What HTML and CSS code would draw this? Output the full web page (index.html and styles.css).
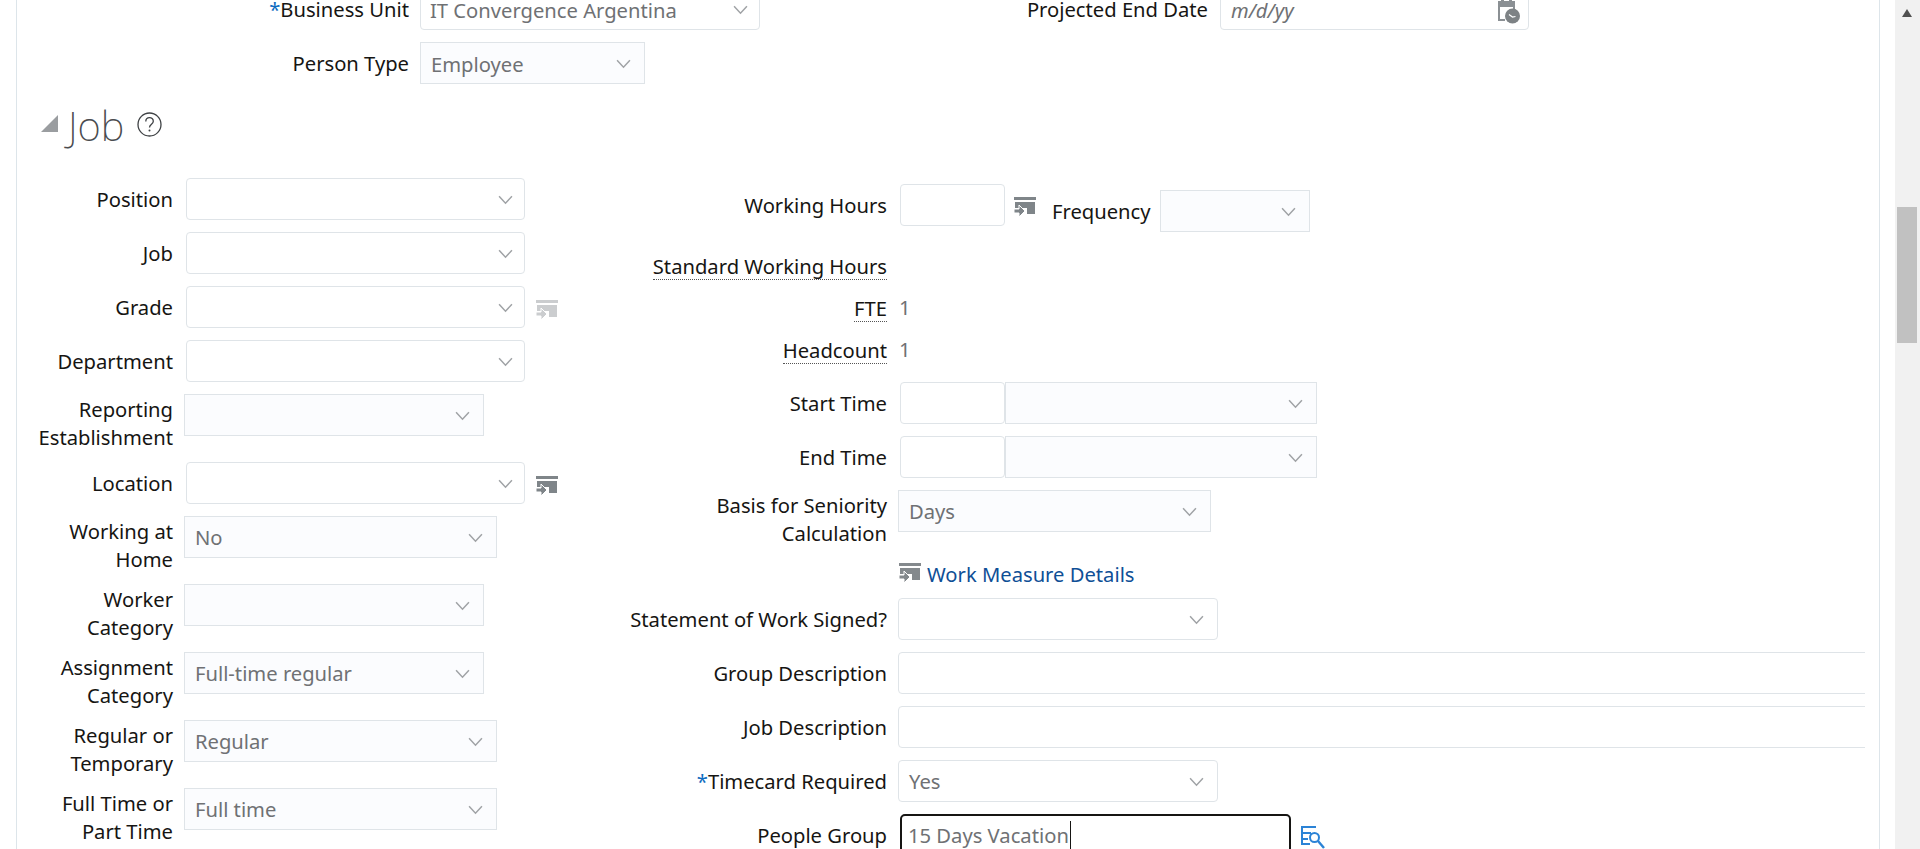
FILE: index.html
```html
<!DOCTYPE html>
<html lang="en">
<head>
  <meta charset="UTF-8">
  <title>Assignment - Job</title>
  <link rel="stylesheet" href="styles.css">
</head>
<body>

<svg class="defs" width="0" height="0">
  <symbol id="i-chev" viewBox="0 0 14 9"><path d="M1 1l6 6.5L13 1" fill="none" stroke="currentColor" stroke-width="1.4"/></symbol>
  <symbol id="i-action" viewBox="0 0 22 21"><path d="M0 0h22v3H0zM1 5h20v12h-8v-6H1z"/><path d="M0 12h5V8l6 6-6 6v-4H0z" stroke="#fff" stroke-width="1"/></symbol>
  <symbol id="i-search" viewBox="0 0 25 24"><path d="M1 1h15v2H3v4h8v2H3v4h5v2H3v3h7v2H1z"/><circle cx="14.500" cy="12.500" r="4.500" fill="none" stroke="currentColor" stroke-width="2"/><path d="M18 16l6 7" fill="none" stroke="currentColor" stroke-width="2.400"/></symbol>
</svg>

<div class="page">
  <main class="panel">

    <div class="row top">
      <label class="lbl lbl-top"><span class="req">*</span>Business Unit</label>
      <div class="sel sel-r w-bu"><span>IT Convergence Argentina</span><svg class="chev"><use href="#i-chev"/></svg></div>
      <label class="lbl lbl-end">Projected End Date</label>
      <div class="sel sel-r w-date"><em>m/d/yy</em>
        <svg class="cal" viewBox="0 0 25 24">
          <path d="M3 1h3V0h3v1h5V0h3v1h3v9h-2V7H5v12h5v2H3z" fill="#8b9094"/>
          <circle cx="17.500" cy="16" r="7.500" fill="#7d8285"/>
          <path d="M14 14.500l3.500 2.500 3-.5" fill="none" stroke="#fff" stroke-width="1.200"/>
        </svg>
      </div>
    </div>
    <div class="row top">
      <label class="lbl lbl-top">Person Type</label>
      <div class="sel sel-ro w-pt"><span>Employee</span><svg class="chev"><use href="#i-chev"/></svg></div>
    </div>

    <h2 class="sec-head">
      <i class="disclosure"></i>
      <span>Job</span>
      <svg class="help" viewBox="0 0 25 25">
        <circle cx="12.500" cy="12.500" r="11.500" fill="none" stroke="#3f4245" stroke-width="1.300"/>
        <path d="M8.800 9.500c0-5 7.500-5 7.500-.3 0 3-3.800 3-3.800 6.300" fill="none" stroke="#3f4245" stroke-width="1.300"/>
        <circle cx="12.500" cy="18.500" r="1" fill="#3f4245"/>
      </svg>
    </h2>

    <div class="columns">
      <section class="col-left">
        <div class="row">
          <label class="lbl">Position</label>
          <div class="sel sel-r w-full"><svg class="chev"><use href="#i-chev"/></svg></div>
        </div>
        <div class="row">
          <label class="lbl">Job</label>
          <div class="sel sel-r w-full"><svg class="chev"><use href="#i-chev"/></svg></div>
        </div>
        <div class="row">
          <label class="lbl">Grade</label>
          <div class="sel sel-r w-full"><svg class="chev"><use href="#i-chev"/></svg></div>
          <svg class="act act-off"><use href="#i-action"/></svg>
        </div>
        <div class="row">
          <label class="lbl">Department</label>
          <div class="sel sel-r w-full"><svg class="chev"><use href="#i-chev"/></svg></div>
        </div>
        <div class="row two">
          <label class="lbl">Reporting<br>Establishment</label>
          <div class="sel sel-ro w-mid"><svg class="chev"><use href="#i-chev"/></svg></div>
        </div>
        <div class="row">
          <label class="lbl">Location</label>
          <div class="sel sel-r w-full"><svg class="chev"><use href="#i-chev"/></svg></div>
          <svg class="act"><use href="#i-action"/></svg>
        </div>
        <div class="row two">
          <label class="lbl">Working at<br>Home</label>
          <div class="sel sel-ro w-wide"><span>No</span><svg class="chev"><use href="#i-chev"/></svg></div>
        </div>
        <div class="row two">
          <label class="lbl">Worker<br>Category</label>
          <div class="sel sel-ro w-mid"><svg class="chev"><use href="#i-chev"/></svg></div>
        </div>
        <div class="row two">
          <label class="lbl">Assignment<br>Category</label>
          <div class="sel sel-ro w-mid"><span>Full-time regular</span><svg class="chev"><use href="#i-chev"/></svg></div>
        </div>
        <div class="row two">
          <label class="lbl">Regular or<br>Temporary</label>
          <div class="sel sel-ro w-wide"><span>Regular</span><svg class="chev"><use href="#i-chev"/></svg></div>
        </div>
        <div class="row two">
          <label class="lbl">Full Time or<br>Part Time</label>
          <div class="sel sel-ro w-wide"><span>Full time</span><svg class="chev"><use href="#i-chev"/></svg></div>
        </div>
      </section>

      <section class="col-right">
        <div class="row hours">
          <label class="lbl">Working Hours</label>
          <div class="sel sel-r w-num"></div>
          <svg class="act"><use href="#i-action"/></svg>
          <label class="lbl freq-lbl">Frequency</label>
          <div class="sel sel-ro w-freq freq"><svg class="chev"><use href="#i-chev"/></svg></div>
        </div>
        <div class="row info first-info">
          <label class="lbl"><span class="dotted">Standard Working Hours</span></label>
        </div>
        <div class="row info">
          <label class="lbl"><span class="dotted">FTE</span></label>
          <span class="val">1</span>
        </div>
        <div class="row info last-info">
          <label class="lbl"><span class="dotted">Headcount</span></label>
          <span class="val">1</span>
        </div>
        <div class="row">
          <label class="lbl">Start Time</label>
          <div class="sel sel-r w-num"></div>
          <div class="sel sel-ro w-ampm"><svg class="chev"><use href="#i-chev"/></svg></div>
        </div>
        <div class="row">
          <label class="lbl">End Time</label>
          <div class="sel sel-r w-num"></div>
          <div class="sel sel-ro w-ampm"><svg class="chev"><use href="#i-chev"/></svg></div>
        </div>
        <div class="row two basis">
          <label class="lbl">Basis for Seniority<br>Calculation</label>
          <div class="sel sel-ro w-basis"><span>Days</span><svg class="chev"><use href="#i-chev"/></svg></div>
        </div>
        <div class="row link-row">
          <span class="lbl"></span>
          <svg class="act act-link"><use href="#i-action"/></svg>
          <a class="link" href="#">Work Measure Details</a>
        </div>
        <div class="row">
          <label class="lbl">Statement of Work Signed?</label>
          <div class="sel sel-r w-yes"><svg class="chev"><use href="#i-chev"/></svg></div>
        </div>
        <div class="row">
          <label class="lbl">Group Description</label>
          <div class="sel sel-r w-long"></div>
        </div>
        <div class="row">
          <label class="lbl">Job Description</label>
          <div class="sel sel-r w-long"></div>
        </div>
        <div class="row">
          <label class="lbl"><span class="req">*</span>Timecard Required</label>
          <div class="sel sel-r w-yes"><span>Yes</span><svg class="chev"><use href="#i-chev"/></svg></div>
        </div>
        <div class="row">
          <label class="lbl">People Group</label>
          <div class="sel focus"><span class="caret">15 Days Vacation</span></div>
          <svg class="lookup"><use href="#i-search"/></svg>
        </div>
      </section>
    </div>

  </main>

  <div class="scrollbar">
    <i class="arrow"></i>
    <div class="thumb"></div>
  </div>
</div>

</body>
</html>
```

FILE: styles.css
```css
* {
  box-sizing: border-box;
}
html, body {
  margin: 0;
  height: 849px;
  overflow: hidden;
  background: #fff;
}
body {
  font-family: "Noto Sans", "Liberation Sans", sans-serif;
  font-size: 20.2px;
  line-height: 28px;
  color: #161513;
}
.defs {
  position: absolute;
}
.page {
  display: flex;
  height: 849px;
}

/* panel */
.panel {
  width: 1864px;
  height: 861px;
  margin-left: 16px;
  margin-top: -12px;
  margin-right: 15px;
  border-left: 1px solid #dde5ea;
  border-right: 1px solid #dde5ea;
}
.row {
  display: flex;
  align-items: flex-start;
  height: 42px;
  margin-bottom: 12px;
}
.row.two {
  height: 56px;
}
.lbl {
  flex: none;
  width: 156px;
  padding-top: 7px;
  text-align: right;
}
.two .lbl {
  padding-top: 1px;
}
.req {
  color: #0d6cbf;
}

/* top rows */
.lbl-top {
  width: 392px;
}
.lbl-end {
  width: 448px;
}
.top .sel {
  margin-left: 11px;
}
.top .lbl-end + .sel {
  margin-left: 12px;
}

/* select boxes */
.sel {
  flex: none;
  position: relative;
  display: flex;
  align-items: center;
  height: 42px;
  padding: 0 0 0 10px;
  color: #6f7174;
  border: 1px solid #dfe4e8;
}
.top .sel {
  padding-top: 2px;
}
.sel-r {
  background: #fff;
  border-radius: 4px;
}
.sel-ro {
  background: #fbfcfe;
}
.chev {
  position: absolute;
  right: 13px;
  top: 16px;
  width: 15px;
  height: 10px;
  color: #a0a3a6;
}
.w-bu .chev,
.w-full .chev {
  right: 11px;
}
.w-bu { width: 340px; padding-left: 9px; }
.w-date { width: 309px; }
.w-pt { width: 225px; }
.w-full { width: 339px; }
.w-mid { width: 300px; }
.w-wide { width: 313px; }
.w-num { width: 105px; }
.w-freq { width: 150px; }
.w-ampm { width: 312px; }
.w-basis { width: 313px; }
.w-yes { width: 320px; }
.w-long { width: 1000px; }
.col-left .sel-r { margin-left: 13px; }
.col-left .sel-ro { margin-left: 11px; }
.col-right .lbl + .sel { margin-left: 11px; }
.col-right .lbl + .sel.w-num { margin-left: 13px; }
.sel em {
  color: #6f7174;
}
.cal {
  position: absolute;
  right: 8px;
  top: 11px;
  width: 25px;
  height: 24px;
}

/* section heading */
.sec-head {
  display: flex;
  align-items: flex-start;
  height: 82px;
  margin: 0;
  padding: 5px 0 0 24px;
  font-size: 40px;
  font-weight: 200;
  line-height: 50px;
  color: #4a4c4f;
}
.disclosure {
  width: 17px;
  height: 17px;
  margin-top: 14px;
  background: #9a9da0;
  clip-path: polygon(100% 0, 100% 100%, 0 100%);
}
.sec-head span {
  margin-left: 10px;
}
.help {
  width: 25px;
  height: 25px;
  margin: 11px 0 0 13px;
}

/* two columns */
.columns {
  display: flex;
}
.col-left {
  flex: none;
  width: 583px;
}
.col-right {
  flex: none;
  width: 1265px;
  padding-top: 6px;
  overflow: hidden;
}
.col-right .lbl {
  width: 287px;
}
.act {
  flex: none;
  width: 22px;
  height: 21px;
  margin: 14px 0 0 11px;
  fill: #7f8589;
}
.act-off {
  opacity: 0.4;
}
.hours .act {
  margin: 13px 0 0 9px;
}
.col-right .freq-lbl {
  width: auto;
  margin-left: 16px;
  padding-top: 13px;
}
.col-right .freq-lbl + .sel.freq {
  margin: 6px 0 0 9px;
}
.first-info {
  margin-top: 19px;
}
.info {
  margin-bottom: 0;
}
.last-info {
  margin-bottom: 11px;
}
.dotted {
  display: inline-block;
  line-height: 26px;
  border-bottom: 1px dotted #555;
}
.val {
  margin-left: 12px;
  padding-top: 6px;
  color: #6f7174;
}
.basis {
  margin-bottom: 14px;
}
.link-row {
  height: 28px;
  margin-bottom: 10px;
}
.link-row .lbl {
  padding-top: 0;
}
.act-link {
  margin: 3px 0 0 12px;
  fill: #84898d;
}
.link {
  margin-left: 6px;
  color: #0f4f96;
  text-decoration: none;
}
.col-right .lbl + .sel.focus {
  width: 391px;
  margin-left: 13px;
  padding-left: 6px;
  border: 2px solid #161513;
  border-radius: 5px;
}
.caret {
  padding-right: 1px;
  border-right: 1px solid #161513;
}
.lookup {
  flex: none;
  width: 25px;
  height: 24px;
  margin: 11px 0 0 9px;
  color: #2b83d6;
  fill: #2b83d6;
}

/* scrollbar */
.scrollbar {
  flex: none;
  width: 25px;
  height: 849px;
  padding: 9px 3px 0 2px;
  background: #f1f1f1;
}
.arrow {
  display: block;
  width: 0;
  margin: 0 auto;
  border: 5px solid transparent;
  border-top: 0;
  border-bottom: 8px solid #505050;
}
.thumb {
  height: 136px;
  margin-top: 190px;
  background: #c1c1c1;
}
```
